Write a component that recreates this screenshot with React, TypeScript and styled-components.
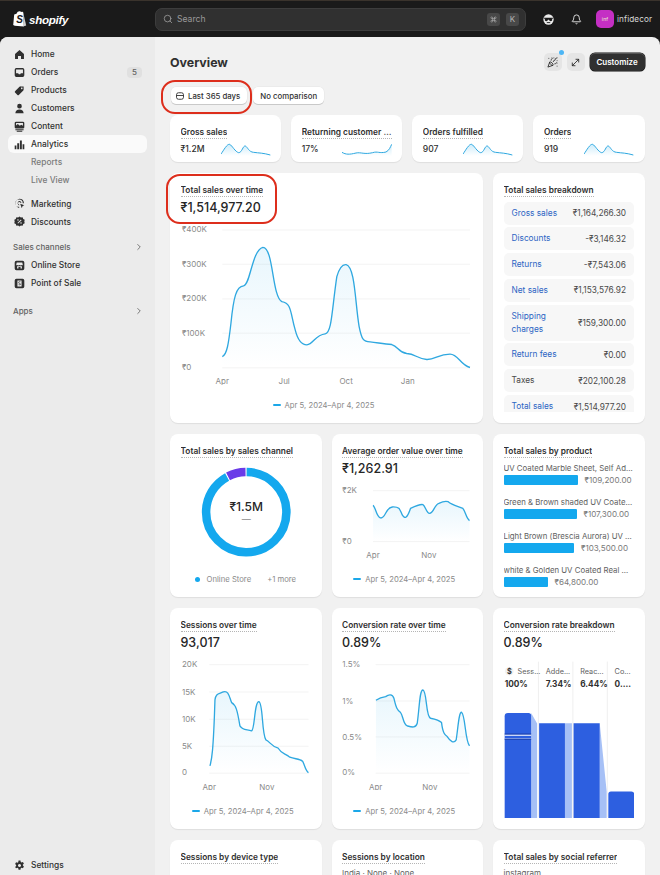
import React from "react";
import styled, { createGlobalStyle } from "styled-components";
import { Search, Command, Bell, ChevronRight, PartyPopper, MoveDiagonal } from "lucide-react";

const Global = createGlobalStyle`
  html, body { margin: 0; padding: 0; height: 100%; overflow: hidden; background: #1a1a1a; }
  * { box-sizing: border-box; }
  body { font-family: Inter, "Noto Sans", sans-serif; font-size: 8.4px; color: #303030; -webkit-font-smoothing: antialiased; }
`;

const Root = styled.div`position: relative; width: 660px; height: 875px; display: flex; flex-direction: column; overflow: hidden; background: #1a1a1a; border-top: 1px solid #3a332c;`;
const TopBar = styled.header`height: 36px; flex: none; display: flex; align-items: center; padding: 0 0 0 13px;`;
const Logo = styled.div`width: 142px; flex: none; display: flex; align-items: center; gap: 2px; color: #fff; font: italic 700 11.6px "Liberation Sans", sans-serif; letter-spacing: -0.3px;`;
const SearchBox = styled.div`width: 371px; height: 23px; flex: none; display: flex; align-items: center; gap: 4px; padding: 0 6px 0 7px; background: #303030; border: 1px solid #3d3d3d; border-radius: 7px; color: #9a9a9a; font-size: 8.6px;`;
const SearchText = styled.span`flex: 1;`;
const Kbd = styled.span`width: 13px; height: 13px; margin-left: 2px; display: flex; align-items: center; justify-content: center; background: #484848; border-radius: 3px; color: #b5b5b5; font-size: 8px;`;
const TopIcons = styled.div`flex: none; display: flex; align-items: center; margin-left: 16.5px; gap: 17px; color: #e8e8e8;`;
const Account = styled.div`flex: none; display: flex; align-items: center; margin-left: 14.5px; gap: 3px; color: #d8d8d8; font-size: 8.2px; letter-spacing: 0.1px;`;
const Avatar = styled.span`width: 18px; height: 18px; border-radius: 5px; background: #c42fc4; color: #eec; display: flex; align-items: center; justify-content: center; font-size: 5px;`;

const Main = styled.div`flex: 1; min-height: 0; display: flex; border-radius: 8px 8px 0 0; overflow: hidden; background: #f1f1f1;`;
const Sidebar = styled.nav`width: 155px; flex: none; background: #ebebeb; padding: 8px 8px 1px; display: flex; flex-direction: column;`;
const NavGroup = styled.div<{ $mt?: number }>`margin-top: ${p => p.$mt ?? 0}px;`;
const NavRow = styled.div<{ $active?: boolean; $sub?: boolean }>`height: 18px; display: flex; align-items: center; gap: 6.5px; padding-left: ${p => (p.$sub ? 23 : 5.5)}px; padding-right: 5px; border-radius: 6px;
  background: ${p => (p.$active ? "#fafafa" : "transparent")}; color: ${p => (p.$sub ? "#7a7a7a" : "#303030")}; font-weight: ${p => (p.$active ? 550 : 500)};`;
const NavIcon = styled.svg`width: 11px; height: 11px; flex: none; fill: #303030;`;
const NavLabel = styled.span`flex: 1;`;
const Badge = styled.span`width: 15px; height: 11px; border-radius: 4px; background: #e0e0e0; color: #616161; display: flex; align-items: center; justify-content: center; font-size: 8px;`;
const SectionRow = styled.div`height: 18px; display: flex; align-items: center; justify-content: space-between; padding: 0 3px 0 5px; color: #616161; font-size: 8px; font-weight: 500;`;
const Bottom = styled.div`margin-top: auto;`;

const Content = styled.main`flex: 1; min-width: 0; padding: 16px 15.5px 0 15px; overflow: hidden;`;
const HeaderRow = styled.div`height: 18px; display: flex; align-items: center; justify-content: space-between;`;
const H1 = styled.h1`margin: 0; font-size: 12.4px; font-weight: 650; color: #303030;`;
const Actions = styled.div`display: flex; align-items: center; gap: 5px;`;
const IconBtn = styled.span`position: relative; width: 18px; height: 18px; border-radius: 5px; background: #e5e5e5; color: #303030; display: flex; align-items: center; justify-content: center;`;
const Dot = styled.span`position: absolute; top: -3px; right: -2px; width: 5px; height: 5px; border-radius: 50%; background: #4db6f5;`;
const Primary = styled.span`height: 18px; width: 55px; border-radius: 5px; background: #303030; color: #fff; font-size: 8px; font-weight: 600; display: flex; align-items: center; justify-content: center; box-shadow: inset 0 1px 0 #555, 0 0 0 .5px #111;`;
const Filters = styled.div`margin: 16px 0 11px 1px; display: flex; gap: 6px;`;
const FilterBtn = styled.span`height: 17px; display: flex; align-items: center; gap: 4px; padding: 0 7px 0 5px; border-radius: 5px; background: #fff; font-weight: 500; font-size: 7.8px; color: #303030; box-shadow: 0 1px 0 #c9c9c9, 0 0 0 .5px #e6e6e6;`;
const MetricGrid = styled.div`display: grid; grid-template-columns: repeat(4, 1fr); gap: 10px; margin-bottom: 11px;`;
const Card = styled.section`background: #fff; border-radius: 8px; box-shadow: 0 1px 1px rgba(0,0,0,.08); padding: 11px 10.5px 12px; display: flex; flex-direction: column; min-width: 0; overflow: hidden;`;
const MetricCard = styled(Card)`height: 47px; padding-top: 11px;`;
const Title = styled.h2`margin: 0; align-self: flex-start; max-width: 100%; line-height: 12px; font-size: 8.35px; font-weight: 600; color: #303030; border-bottom: 1px dotted #b5b5b5; white-space: nowrap; overflow: hidden; text-overflow: ellipsis; flex: none;`;
const MetricRow = styled.div`margin-top: 3px; display: flex; align-items: center; justify-content: space-between; font-size: 8.6px; font-weight: 500;`;
const Spark = styled.svg`width: 50px; height: 14px; display: block;`;
const Board = styled.div`display: grid; grid-template-columns: repeat(3, 1fr); grid-template-rows: 250px 163px 221px 200px; gap: 11px 10px;`;
const WideCard = styled(Card)`grid-column: span 2;`;
const Value = styled.div`margin-top: 2px; line-height: 18px; font-size: 12.5px; font-weight: 500; color: #262626; flex: none;`;
const ChartSvg = styled.svg`display: block; width: 100%; margin-top: 7px; flex: none; font-family: Inter, sans-serif;`;
const DonutSvg = styled(ChartSvg)`margin-top: 6px;`;
const FunnelSvg = styled(ChartSvg)`margin-top: 3px;`;
const Legend = styled.div`margin-top: auto; height: 12px; display: flex; align-items: center; justify-content: center; gap: 4px; color: #8a8a8a; font-size: 7.7px; flex: none;`;
const DateRow = styled(Legend)`padding-right: 6px;`;
const LegendLine = styled.span`width: 8px; height: 1.5px; border-radius: 1px; background: #1ba7e8;`;
const LegendDot = styled.span`width: 5px; height: 5px; border-radius: 50%; background: #14a8ee;`;
const LegendMore = styled.span`margin-left: 12px;`;

const BreakList = styled.div`margin-top: 4.5px; display: flex; flex-direction: column; gap: 2.8px; overflow: hidden; flex: 1; min-height: 0; margin-bottom: -1px;`;
const BreakRow = styled.div`flex: none; display: flex; align-items: center; justify-content: space-between; min-height: 23px; padding: 5px 8px; background: #f7f7f7; border-radius: 5px; font-size: 8.3px; color: #4a4a4a; gap: 8px;`;
const BreakLabel = styled.span<{ $link?: boolean }>`color: ${p => (p.$link ? "#2c65c4" : "#4a4a4a")}; line-height: 13px; max-width: 50px; white-space: normal;`;
const BreakLabelWide = styled(BreakLabel)`max-width: none; white-space: nowrap;`;

const ProductList = styled.div`margin-top: 4px; display: flex; flex-direction: column; gap: 11px;`;
const Product = styled.div`min-width: 0;`;
const ProductName = styled.div`line-height: 12px; font-size: 7.8px; color: #616161; white-space: nowrap; overflow: hidden; text-overflow: ellipsis;`;
const ProductBar = styled.div`margin-top: 1px; display: flex; align-items: center; gap: 7px; font-size: 8.1px; color: #7a7a7a;`;
const Bar = styled.span<{ $w: number }>`width: ${p => p.$w}px; height: 10px; border-radius: 1px; background: #14a8ee;`;
const SubText = styled.div`margin-top: 4px; font-size: 8px; color: #616161;`;

const Annotation = styled.div<{ $l: number; $t: number; $w: number; $h: number }>`position: absolute; left: ${p => p.$l}px; top: ${p => p.$t}px; width: ${p => p.$w}px; height: ${p => p.$h}px; border: 2px solid #dd2e1c; border-radius: 14px; pointer-events: none;`;

const icons: Record<string, React.ReactNode> = {
  home: <path d="M8 1.500 14.500 7.200V14.500H10.200v-4.300H5.800v4.300H1.500V7.200z" />,
  orders: <path fillRule="evenodd" d="M3.500 1.500h9A2.500 2.500 0 0 1 15 4v8a2.500 2.500 0 0 1-2.500 2.500h-9A2.500 2.500 0 0 1 1 12V4a2.500 2.500 0 0 1 2.500-2.500zM3 3.500V9h3l1 1.500h2L10 9h3V3.500z" />,
  products: <path fillRule="evenodd" d="M1.500 9 8 2.500a2 2 0 0 1 1.400-.5H14v4.600a2 2 0 0 1-.5 1.400L7 14.500a1.500 1.500 0 0 1-2 0L1.500 11a1.500 1.500 0 0 1 0-2zM11.300 3.500a1.200 1.200 0 1 0 .01 0z" />,
  customers: <path d="M8 1.200a3.400 3.400 0 1 1 0 6.800 3.400 3.400 0 0 1 0-6.800zM2 15c0-3.200 2.400-5.500 6-5.500s6 2.300 6 5.500z" />,
  content: <path fillRule="evenodd" d="M3 1h10a2 2 0 0 1 2 2v6a2 2 0 0 1-2 2H3a2 2 0 0 1-2-2V3a2 2 0 0 1 2-2zM3 3v3.500l2.500-2 3 2.500 2-1.500L13 7V3zM2 12h12v1.500H2zM4 14h8v1.500H4z" />,
  analytics: <path d="M1 9.500h2.500V15H1zM4.700 6h2.800v9H4.700zM8.600 2h2.800v13H8.600zM12.500 7.500H15V15h-2.500z" />,
  marketing: <path fillRule="evenodd" d="M7.500 1a7 7 0 0 1 7 6.500h-1.800A5.300 5.300 0 1 0 7.500 12.800v1.700A7 7 0 0 1 7.500 1zm0 3.500A3.500 3.500 0 0 1 11 7H9.300A1.800 1.800 0 1 0 7.500 9.300V11a3.500 3.500 0 0 1 0-6.500zM9 8.500l6 2-2.500 1.200L11.300 15z" />,
  discounts: <path fillRule="evenodd" d="M8 .6l2 1.500 2.500-.3.9 2.400 2.200 1.300-.6 2.500.6 2.500-2.200 1.300-.9 2.400-2.500-.3-2 1.500-2-1.500-2.500.3-.9-2.400L.4 10.500 1 8 .4 5.500l2.200-1.300.9-2.400 2.500.3zM10 5 5 10l1 1 5-5zM5.800 4.800a1 1 0 1 0 .01 0zM10.200 9.200a1 1 0 1 0 .01 0z" />,
  store: <path fillRule="evenodd" d="M3.500 1h9A2.500 2.500 0 0 1 15 3.500v9a2.500 2.500 0 0 1-2.500 2.500h-9A2.500 2.500 0 0 1 1 12.500v-9A2.500 2.500 0 0 1 3.500 1zM4 3.500 3.200 7c.3 1 1.500 1 2 .3.500.700 1.500.700 2.800 0 1.300.700 2.300.700 2.800 0 .500.700 1.700.700 2-.3L12 3.500zM4.500 9v3.500h2V10h3v2.500h2V9z" />,
  pos: <path fillRule="evenodd" d="M3.500 1h9A2.500 2.500 0 0 1 15 3.500v9a2.500 2.500 0 0 1-2.500 2.500h-9A2.500 2.500 0 0 1 1 12.500v-9A2.500 2.500 0 0 1 3.500 1zM5 3.500v9h6v-9zM9.700 6c-1-.6-2.400-.3-2.400.6 0 1 2.400.9 2.400 2.500 0 1.300-1.600 1.700-3 1l.3-.9c.900.500 1.800.300 1.800-.2 0-.8-2.400-.8-2.400-2.400 0-1.400 1.700-1.800 3.100-1.200z" />,
  settings: <path fillRule="evenodd" d="M6.600.8h2.800l.4 2 1.200.7 2-.6 1.400 2.400-1.500 1.400v1.400l1.500 1.400-1.400 2.400-2-.6-1.200.7-.4 2H6.600l-.4-2-1.200-.7-2 .6L1.600 10l1.500-1.400V7.200L1.600 5.800 3 3.400l2 .6 1.200-.7zM8 5.700a2.200 2.200 0 1 0 .01 0z" />,
};
const Nav = ({ icon, label, active, badge }: { icon: string; label: string; active?: boolean; badge?: string }) => (
  <NavRow $active={active}>
    <NavIcon viewBox="0 0 16 16">{icons[icon]}</NavIcon>
    <NavLabel>{label}</NavLabel>
    {badge && <Badge>{badge}</Badge>}
  </NavRow>
);

const peak = "M0 36C8 25 18 5 26 7 33 10 43 30 53 32 63 32 66 10 73 12 80 15 83 30 98 31 113 33 128 33 148 39";
const ret = "M0 31C12 38 22 38 42 33 57 30 67 38 92 32 107 27 112 35 132 30 142 25 145 15 149 7";
const SparkLine = ({ d }: { d: string }) => (
  <Spark viewBox="0 0 150 42" preserveAspectRatio="none">
    <defs>
      <linearGradient id="sf" x1="0" y1="0" x2="0" y2="1"><stop offset="0" stopColor="#1ba7e8" stopOpacity=".22" /><stop offset="1" stopColor="#1ba7e8" stopOpacity="0" /></linearGradient>
    </defs>
    <path d={`${d}V42H0Z`} fill="url(#sf)" />
    <path d={d} fill="none" stroke="#2fa8e0" strokeWidth="3" />
  </Spark>
);

type ChartProps = { box: [number, number, number, number]; d: string; endX: number; startX: number; base: number; grid: number[]; y: [string, number, number][]; x: [string, number, number][]; gridStart: number; gridEnd: number; id: string };
const LineChart = ({ box, d, endX, startX, base, grid, y, x, gridStart, gridEnd, id }: ChartProps) => (
  <ChartSvg viewBox={box.join(" ")}>
    <defs>
      <linearGradient id={id} x1="0" y1="0" x2="0" y2="1"><stop offset="0" stopColor="#1ba7e8" stopOpacity=".1" /><stop offset="1" stopColor="#1ba7e8" stopOpacity="0" /></linearGradient>
    </defs>
    {grid.map(g => <line key={g} x1={gridStart} x2={gridEnd} y1={g} y2={g} stroke="#f3f3f3" strokeWidth="3" />)}
    {y.map(([t, tx, ty]) => <text key={t} x={tx} y={ty} fontSize="24" fill="#8a8a8a">{t}</text>)}
    {x.map(([t, tx, ty]) => <text key={t} x={tx} y={ty} fontSize="24" textAnchor="middle" fill="#8a8a8a">{t}</text>)}
    <path d={`${d}L${endX} ${base}L${startX} ${base}Z`} fill={`url(#${id})`} />
    <path d={d} fill="none" stroke="#2fa8e0" strokeWidth="4" />
  </ChartSvg>
);

const DateLegend = () => <DateRow><LegendLine />Apr 5, 2024–Apr 4, 2025</DateRow>;

const breakdown: [string, string, boolean][] = [
  ["Gross sales", "₹1,164,266.30", true], ["Discounts", "-₹3,146.32", true], ["Returns", "-₹7,543.06", true], ["Net sales", "₹1,153,576.92", true],
  ["Shipping charges", "₹159,300.00", true], ["Return fees", "₹0.00", true], ["Taxes", "₹202,100.28", false], ["Total sales", "₹1,514,977.20", true],
];
const products: [string, number, string][] = [
  ["UV Coated Marble Sheet, Self Adhesive Wall Panel", 74, "₹109,200.00"],
  ["Green & Brown shaded UV Coated Marble Sheet", 73, "₹107,300.00"],
  ["Light Brown (Brescia Aurora) UV Coated Marble", 70.5, "₹103,500.00"],
  ["white & Golden UV Coated Real Marble Sheet", 44, "₹64,800.00"],
];

export default function App() {
  return (
    <Root>
      <Global />
      <TopBar>
        <Logo>
          <svg width="14" height="16" viewBox="0 0 14 16">
            <path d="M1.200 3.400 3.500 2.700C4 1 5.300.2 6.500.2c.9 0 1.300.4 1.500.9l1.100-.3 1 .2.800 14.500-9.100-.8L.2 14z" fill="#fff" />
            <path d="M10 1.100 13.200 14.600 10.800 15.300 9.900 1.100z" fill="#cfcfcf" />
            <text x="3.300" y="12.300" fontSize="10" fontWeight="700" fontFamily="Liberation Sans, sans-serif" fill="#1a1a1a">S</text>
          </svg>
          shopify
        </Logo>
        <SearchBox>
          <Search size={10} />
          <SearchText>Search</SearchText>
          <Kbd><Command size={7} /></Kbd>
          <Kbd>K</Kbd>
        </SearchBox>
        <TopIcons>
          <svg width="11" height="11" viewBox="0 0 16 16">
            <circle cx="8" cy="8" r="7.500" fill="#ececec" />
            <path d="M1.500 5.500h13v1.500H12.500a2 2 0 0 1 1 1.500c0 1.300-1 2-2.300 2S9 9.800 8.800 8.500H7.200C7 9.800 6.100 10.500 4.800 10.500s-2.300-.7-2.300-2a2 2 0 0 1 1-1.500H1.500z" fill="#1a1a1a" />
            <path d="M5.500 12.500h5" stroke="#1a1a1a" strokeWidth="1.300" />
          </svg>
          <Bell size={11} strokeWidth={2} />
        </TopIcons>
        <Account><Avatar>inf</Avatar>infidecor</Account>
      </TopBar>
      <Main>
        <Sidebar>
          <NavGroup>
            <Nav icon="home" label="Home" />
            <Nav icon="orders" label="Orders" badge="5" />
            <Nav icon="products" label="Products" />
            <Nav icon="customers" label="Customers" />
            <Nav icon="content" label="Content" />
            <Nav icon="analytics" label="Analytics" active />
            <NavRow $sub>Reports</NavRow>
            <NavRow $sub>Live View</NavRow>
          </NavGroup>
          <NavGroup $mt={5.5}>
            <Nav icon="marketing" label="Marketing" />
            <Nav icon="discounts" label="Discounts" />
          </NavGroup>
          <NavGroup $mt={7.5}>
            <SectionRow>Sales channels<ChevronRight size={10} color="#616161" /></SectionRow>
            <Nav icon="store" label="Online Store" />
            <Nav icon="pos" label="Point of Sale" />
          </NavGroup>
          <NavGroup $mt={10}>
            <SectionRow>Apps<ChevronRight size={10} color="#616161" /></SectionRow>
          </NavGroup>
          <Bottom><Nav icon="settings" label="Settings" /></Bottom>
        </Sidebar>
        <Content>
          <HeaderRow>
            <H1>Overview</H1>
            <Actions>
              <IconBtn><PartyPopper size={11} /><Dot /></IconBtn>
              <IconBtn><MoveDiagonal size={11} /></IconBtn>
              <Primary>Customize</Primary>
            </Actions>
          </HeaderRow>
          <Filters>
            <FilterBtn>
              <svg width="8" height="8" viewBox="0 0 16 16" fill="none" stroke="#303030" strokeWidth="1.800"><rect x="1" y="1.500" width="14" height="13" rx="4" /><path d="M1 7h14" /></svg>
              Last 365 days
            </FilterBtn>
            <FilterBtn>&nbsp;No comparison</FilterBtn>
          </Filters>
          <MetricGrid>
            <MetricCard><Title>Gross sales</Title><MetricRow>₹1.2M<SparkLine d={peak} /></MetricRow></MetricCard>
            <MetricCard><Title>Returning customer rate</Title><MetricRow>17%<SparkLine d={ret} /></MetricRow></MetricCard>
            <MetricCard><Title>Orders fulfilled</Title><MetricRow>907<SparkLine d={peak} /></MetricRow></MetricCard>
            <MetricCard><Title>Orders</Title><MetricRow>919<SparkLine d={peak} /></MetricRow></MetricCard>
          </MetricGrid>
          <Board>
            <WideCard>
              <Title>Total sales over time</Title>
              <Value>₹1,514,977.20</Value>
              <LineChart id="a" box={[62, 162, 877, 483]} gridStart={186} gridEnd={930} startX={186} endX={930} base={594}
                grid={[180, 283, 387, 490, 594]}
                y={[["₹400K", 65, 186], ["₹300K", 65, 290], ["₹200K", 65, 393], ["₹100K", 65, 497], ["₹0", 65, 600]]}
                x={[["Apr", 186, 642], ["Jul", 372, 642], ["Oct", 558, 642], ["Jan", 743, 642]]}
                d="M186 560C200 555 205 520 212 460 220 380 228 350 250 348 270 346 275 240 308 232 340 232 335 380 365 395 395 400 390 430 405 480 415 520 430 525 440 525 460 522 465 495 495 492 515 490 515 420 530 320 540 285 550 283 558 284 585 290 585 400 597 470 605 510 610 516 630 516 650 518 670 522 695 524 715 530 715 548 740 551 765 552 775 568 800 569 825 570 835 553 870 553 895 553 900 585 930 593" />
              <DateLegend />
            </WideCard>
            <Card>
              <Title>Total sales breakdown</Title>
              <BreakList>
                {breakdown.map(([l, v, link]) => (
                  <BreakRow key={l}>
                    {l === "Shipping charges" ? <BreakLabel $link={link}>{l}</BreakLabel> : <BreakLabelWide $link={link}>{l}</BreakLabelWide>}
                    <span>{v}</span>
                  </BreakRow>
                ))}
              </BreakList>
            </Card>

            <Card>
              <Title>Total sales by sales channel</Title>
              <DonutSvg viewBox="0 0 130 96">
                <g transform="translate(65 48)">
                  <circle r="40" fill="none" stroke="#14a8ee" strokeWidth="8.500" pathLength="360" strokeDasharray="331 29" transform="rotate(-89.500)" />
                  <circle r="40" fill="none" stroke="#6a3be8" strokeWidth="8.500" pathLength="360" strokeDasharray="26 334" transform="rotate(-117)" />
                  <text y="-1" textAnchor="middle" fontSize="12" fontWeight="500" fill="#262626">₹1.5M</text>
                  <text y="10" textAnchor="middle" fontSize="9" fill="#8a8a8a">—</text>
                </g>
              </DonutSvg>
              <Legend><LegendDot />&nbsp;Online Store<LegendMore>+1 more</LegendMore></Legend>
            </Card>
            <Card>
              <Title>Average order value over time</Title>
              <Value>₹1,262.91</Value>
              <LineChart id="b" box={[549, 165, 392, 225]} gridStart={642} gridEnd={932} startX={642} endX={932} base={335}
                grid={[182, 335]} y={[["₹2K", 550, 189], ["₹0", 550, 342]]} x={[["Apr", 642, 384], ["Nov", 810, 384]]}
                d="M642 226C650 230 652 262 665 264 680 266 680 232 700 231 720 230 722 235 730 255 738 268 745 265 755 235 770 228 785 222 792 224 800 228 802 250 812 250 825 250 825 225 840 220 850 215 858 212 868 215 880 225 895 228 912 235 920 245 922 265 932 272" />
              <DateLegend />
            </Card>
            <Card>
              <Title>Total sales by product</Title>
              <ProductList>
                {products.map(([n, w, v]) => (
                  <Product key={n}>
                    <ProductName>{n}</ProductName>
                    <ProductBar><Bar $w={w} />{v}</ProductBar>
                  </Product>
                ))}
              </ProductList>
            </Card>

            <Card>
              <Title>Sessions over time</Title>
              <Value>93,017</Value>
              <LineChart id="c" box={[63, 177, 392, 393]} gridStart={148} gridEnd={446} startX={150} endX={446} base={520}
                grid={[194, 276, 358, 439, 520]}
                y={[["20K", 66, 200], ["15K", 66, 284], ["10K", 66, 365], ["5K", 66, 446], ["0", 66, 527]]}
                x={[["Apr", 148, 570], ["Nov", 321, 570]]}
                d="M150 498C155 480 160 460 165 300 168 280 175 283 190 276 205 270 208 290 215 308 228 315 232 330 240 378 248 392 260 388 275 393 285 390 283 305 297 305 310 310 305 400 318 420 330 425 335 440 355 445 365 462 375 460 390 472 405 478 420 476 428 484 435 495 437 515 446 518" />
              <DateLegend />
            </Card>
            <Card>
              <Title>Conversion rate over time</Title>
              <Value>0.89%</Value>
              <LineChart id="d" box={[549, 177, 392, 393]} gridStart={650} gridEnd={932} startX={651} endX={932} base={520}
                grid={[194, 303, 411, 520]}
                y={[["1.5%", 550, 200], ["1%", 550, 311], ["0.5%", 550, 419], ["0%", 550, 527]]}
                x={[["Apr", 650, 570], ["Nov", 813, 570]]}
                d="M651 301C660 295 665 292 680 290 690 283 700 282 705 295 712 325 715 330 725 338 732 345 733 375 745 378 760 382 770 385 775 370 782 320 782 270 792 270 805 275 800 350 815 355 830 358 840 360 848 368 852 400 858 405 865 410 875 425 885 432 892 420 898 380 900 337 908 337 920 345 918 420 932 438" />
              <DateLegend />
            </Card>
            <Card>
              <Title>Conversion rate breakdown</Title>
              <Value>0.89%</Value>
              <FunnelSvg viewBox="38 165 394 495">
                {[142, 246, 350].map(x => <line key={x} x1={x} x2={x} y1="185" y2="655" stroke="#efefef" strokeWidth="3" />)}
                <circle cx="54" cy="214" r="13" fill="#f1f1f1" />
                <text x="54" y="222" fontSize="22" fontWeight="700" textAnchor="middle" fill="#303030">$</text>
                {[["Sess...", 79], ["Adde...", 164], ["Reac...", 268], ["Co...", 372]].map(([t, x]) => (
                  <text key={t} x={x} y="221" fontSize="22" fill="#616161">{t}</text>
                ))}
                {[["100%", 40], ["7.34%", 164], ["6.44%", 268], ["0....", 372]].map(([t, x]) => (
                  <text key={t} x={x} y="263" fontSize="25" fontWeight="650" fill="#303030">{t}</text>
                ))}
                <path d="M120 340 138 372V657H120z M222 371H243V657H222z M327 371 348 577V657H327z" fill="#a6c0f6" />
                <path d="M40 350a10 10 0 0 1 10-10h62a8 8 0 0 1 8 8V657H40z" fill="#2d5fe0" />
                <path d="M40 405H120V409H40zM40 416H120V418H40z" fill="#fff" />
                <path d="M40 402H120V405H40zM40 418H120V421H40z" fill="#1c3fa8" />
                <path d="M144 371h78V657h-78z M248 371h79V657h-79z" fill="#2d5fe0" />
                <path d="M353 585a8 8 0 0 1 8-8h62a8 8 0 0 1 8 8V657h-78z" fill="#2d5fe0" />
              </FunnelSvg>
            </Card>

            <Card><Title>Sessions by device type</Title></Card>
            <Card><Title>Sessions by location</Title><SubText>India · None · None</SubText></Card>
            <Card><Title>Total sales by social referrer</Title><SubText>instagram</SubText></Card>
          </Board>
        </Content>
      </Main>
      <Annotation $l={161} $t={79} $w={91} $h={34} />
      <Annotation $l={166} $t={173} $w={111} $h={50} />
    </Root>
  );
}
